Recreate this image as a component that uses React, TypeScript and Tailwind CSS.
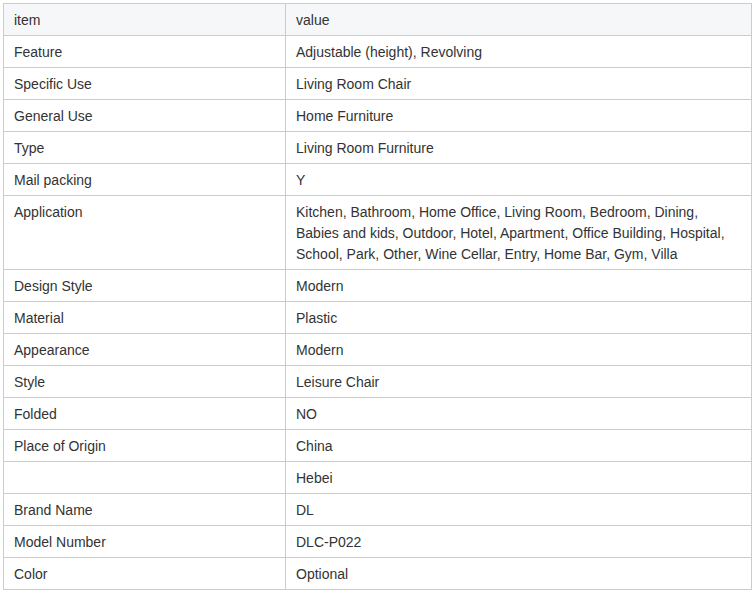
const rows: [string, string][] = [
	["Feature", "Adjustable (height), Revolving"],
	["Specific Use", "Living Room Chair"],
	["General Use", "Home Furniture"],
	["Type", "Living Room Furniture"],
	["Mail packing", "Y"],
	[
		"Application",
		"Kitchen, Bathroom, Home Office, Living Room, Bedroom, Dining, Babies and kids, Outdoor, Hotel, Apartment, Office Building, Hospital, School, Park, Other, Wine Cellar, Entry, Home Bar, Gym, Villa",
	],
	["Design Style", "Modern"],
	["Material", "Plastic"],
	["Appearance", "Modern"],
	["Style", "Leisure Chair"],
	["Folded", "NO"],
	["Place of Origin", "China"],
	["", "Hebei"],
	["Brand Name", "DL"],
	["Model Number", "DLC-P022"],
	["Color", "Optional"],
];

export default function App() {
	return (
		<div className="bg-white p-[3px] font-['Liberation_Sans',Arial,sans-serif] text-[14px] leading-[21px] text-[#333]">
			<table className="w-[749px] table-fixed border-collapse">
				<colgroup>
					<col className="w-[282px]" />
					<col />
				</colgroup>
				<thead>
					<tr className="bg-[#f6f7f9]">
						<td className="border border-[#ccc] px-[10px] pt-[6px] pb-[4px] align-top">
							item
						</td>
						<td className="border border-[#ccc] px-[10px] pt-[6px] pb-[4px] align-top">
							value
						</td>
					</tr>
				</thead>
				<tbody>
					{rows.map(([k, v], i) => (
						<tr key={i}>
							<td className="h-[32px] border border-[#ccc] px-[10px] pt-[6px] pb-[4px] align-top">
								{k}
							</td>
							<td className="border border-[#ccc] px-[10px] pt-[6px] pb-[4px] align-top">
								{v}
							</td>
						</tr>
					))}
				</tbody>
			</table>
		</div>
	);
}
